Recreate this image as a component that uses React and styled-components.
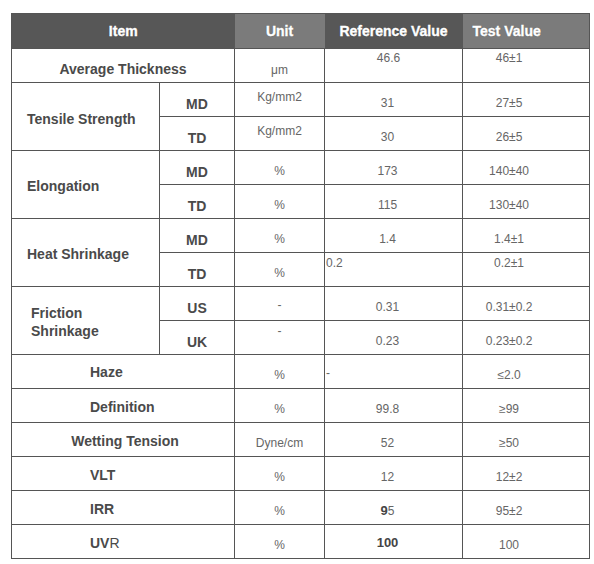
import React from "react";
import styled, { createGlobalStyle } from "styled-components";

const GlobalStyle = createGlobalStyle`
    html, body {
        margin: 0;
        padding: 0;
        background: #ffffff;
    }
    body {
        font-family: "Liberation Sans", Arial, sans-serif;
    }
`;

const Page = styled.div`
    padding: 13px 0 0 11px;
`;

const Table = styled.table`
    border-collapse: collapse;
    table-layout: fixed;
    width: 578px;
    border: 1px solid #555;
`;

const HeadCell = styled.th`
    height: 34px;
    padding: 0;
    padding-left: ${(p) => (p.$left ? "10px" : "0")};
    background: ${(p) => (p.$light ? "#7b7b7b" : "#575757")};
    color: #fff;
    font-size: 14px;
    line-height: 16px;
    font-weight: bold;
    text-align: ${(p) => (p.$left ? "left" : "center")};
    -webkit-text-stroke: 0.4px #fff;
    text-shadow: 0 0 1px rgba(0, 0, 0, 0.5);
    border-bottom: 1px solid #555;
`;

const Row = styled.tr`
    height: 34px;
`;

const Label = styled.td`
    border: 1px solid #555;
    padding: ${(p) => p.$pad || "2px 0 0 0"};
    font-size: 14px;
    font-weight: bold;
    color: #4a4a4a;
    text-align: ${(p) => (p.$center ? "center" : "left")};
    vertical-align: middle;
    line-height: 18px;
`;

const Sub = styled.td`
    border: 1px solid #555;
    padding-top: 9px;
    font-size: 14px;
    line-height: 16px;
    font-weight: bold;
    color: #4a4a4a;
    text-align: center;
`;

const Value = styled.td`
    border: 1px solid #555;
    padding: ${(p) => p.$pad || "7px 0 0 0"};
    font-size: 12px;
    line-height: 15px;
    color: #666;
    text-align: ${(p) => (p.$left ? "left" : "center")};
    vertical-align: ${(p) => p.$valign || "middle"};
    b {
        font-weight: bold;
        font-size: 13px;
        color: #444;
    }
`;

const RefValue = styled(Value)`
    padding-right: 12px;
`;

const TestValue = styled(Value)`
    padding-right: 34px;
`;

function App() {
    return (
        <Page>
            <GlobalStyle />
            <Table>
                <colgroup>
                    <col style={{ width: 148 }} />
                    <col style={{ width: 75 }} />
                    <col style={{ width: 90 }} />
                    <col style={{ width: 138 }} />
                    <col style={{ width: 127 }} />
                </colgroup>
                <thead>
                    <tr>
                        <HeadCell colSpan={2}>Item</HeadCell>
                        <HeadCell $light>Unit</HeadCell>
                        <HeadCell>Reference Value</HeadCell>
                        <HeadCell $light $left>Test Value</HeadCell>
                    </tr>
                </thead>
                <tbody>
                    <Row>
                        <Label colSpan={2} $center $pad="6px 0 0 0">Average Thickness</Label>
                        <Value $pad="10px 0 0 0">μm</Value>
                        <Value $valign="top" $pad="2px 10px 0 0">46.6</Value>
                        <TestValue $valign="top" $pad="2px 0 0 0">46±1</TestValue>
                    </Row>
                    <Row>
                        <Label rowSpan={2} $pad="5px 0 0 15px">Tensile Strength</Label>
                        <Sub>MD</Sub>
                        <Value $pad="0 0 4px 0">Kg/mm2</Value>
                        <RefValue>31</RefValue>
                        <TestValue>27±5</TestValue>
                    </Row>
                    <Row>
                        <Sub>TD</Sub>
                        <Value $pad="0 0 4px 0">Kg/mm2</Value>
                        <RefValue>30</RefValue>
                        <TestValue>26±5</TestValue>
                    </Row>
                    <Row>
                        <Label rowSpan={2} $pad="3px 0 0 15px">Elongation</Label>
                        <Sub>MD</Sub>
                        <Value>%</Value>
                        <RefValue>173</RefValue>
                        <TestValue>140±40</TestValue>
                    </Row>
                    <Row>
                        <Sub>TD</Sub>
                        <Value>%</Value>
                        <RefValue>115</RefValue>
                        <TestValue>130±40</TestValue>
                    </Row>
                    <Row>
                        <Label rowSpan={2} $pad="3px 0 0 15px">Heat Shrinkage</Label>
                        <Sub>MD</Sub>
                        <Value>%</Value>
                        <RefValue>1.4</RefValue>
                        <TestValue>1.4±1</TestValue>
                    </Row>
                    <Row>
                        <Sub>TD</Sub>
                        <Value>%</Value>
                        <Value $left $valign="top" $pad="3px 0 0 1px">0.2</Value>
                        <TestValue $valign="top" $pad="3px 0 0 0">0.2±1</TestValue>
                    </Row>
                    <Row>
                        <Label rowSpan={2} $pad="3px 0 0 19px">Friction<br />Shrinkage</Label>
                        <Sub>US</Sub>
                        <Value $pad="4px 0 0 0">-</Value>
                        <RefValue>0.31</RefValue>
                        <TestValue>0.31±0.2</TestValue>
                    </Row>
                    <Row>
                        <Sub>UK</Sub>
                        <Value $valign="top" $pad="3px 0 0 0">-</Value>
                        <RefValue>0.23</RefValue>
                        <TestValue>0.23±0.2</TestValue>
                    </Row>
                    <Row>
                        <Label colSpan={2} $pad="0 0 0 78px">Haze</Label>
                        <Value>%</Value>
                        <Value $left $pad="4px 0 0 1px">-</Value>
                        <TestValue>≤2.0</TestValue>
                    </Row>
                    <Row>
                        <Label colSpan={2} $pad="2px 0 0 78px">Definition</Label>
                        <Value>%</Value>
                        <RefValue>99.8</RefValue>
                        <TestValue>≥99</TestValue>
                    </Row>
                    <Row>
                        <Label colSpan={2} $center $pad="2px 0 0 4px">Wetting Tension</Label>
                        <Value>Dyne/cm</Value>
                        <RefValue>52</RefValue>
                        <TestValue>≥50</TestValue>
                    </Row>
                    <Row>
                        <Label colSpan={2} $pad="2px 0 0 78px">VLT</Label>
                        <Value>%</Value>
                        <RefValue>12</RefValue>
                        <TestValue>12±2</TestValue>
                    </Row>
                    <Row>
                        <Label colSpan={2} $pad="2px 0 0 78px">IRR</Label>
                        <Value>%</Value>
                        <RefValue><b>9</b>5</RefValue>
                        <TestValue>95±2</TestValue>
                    </Row>
                    <Row>
                        <Label colSpan={2} $pad="2px 0 0 78px">UV<span style={{ fontWeight: "normal" }}>R</span></Label>
                        <Value>%</Value>
                        <RefValue $pad="2px 12px 0 0"><b>100</b></RefValue>
                        <TestValue>100</TestValue>
                    </Row>
                </tbody>
            </Table>
        </Page>
    );
}

export default App;
